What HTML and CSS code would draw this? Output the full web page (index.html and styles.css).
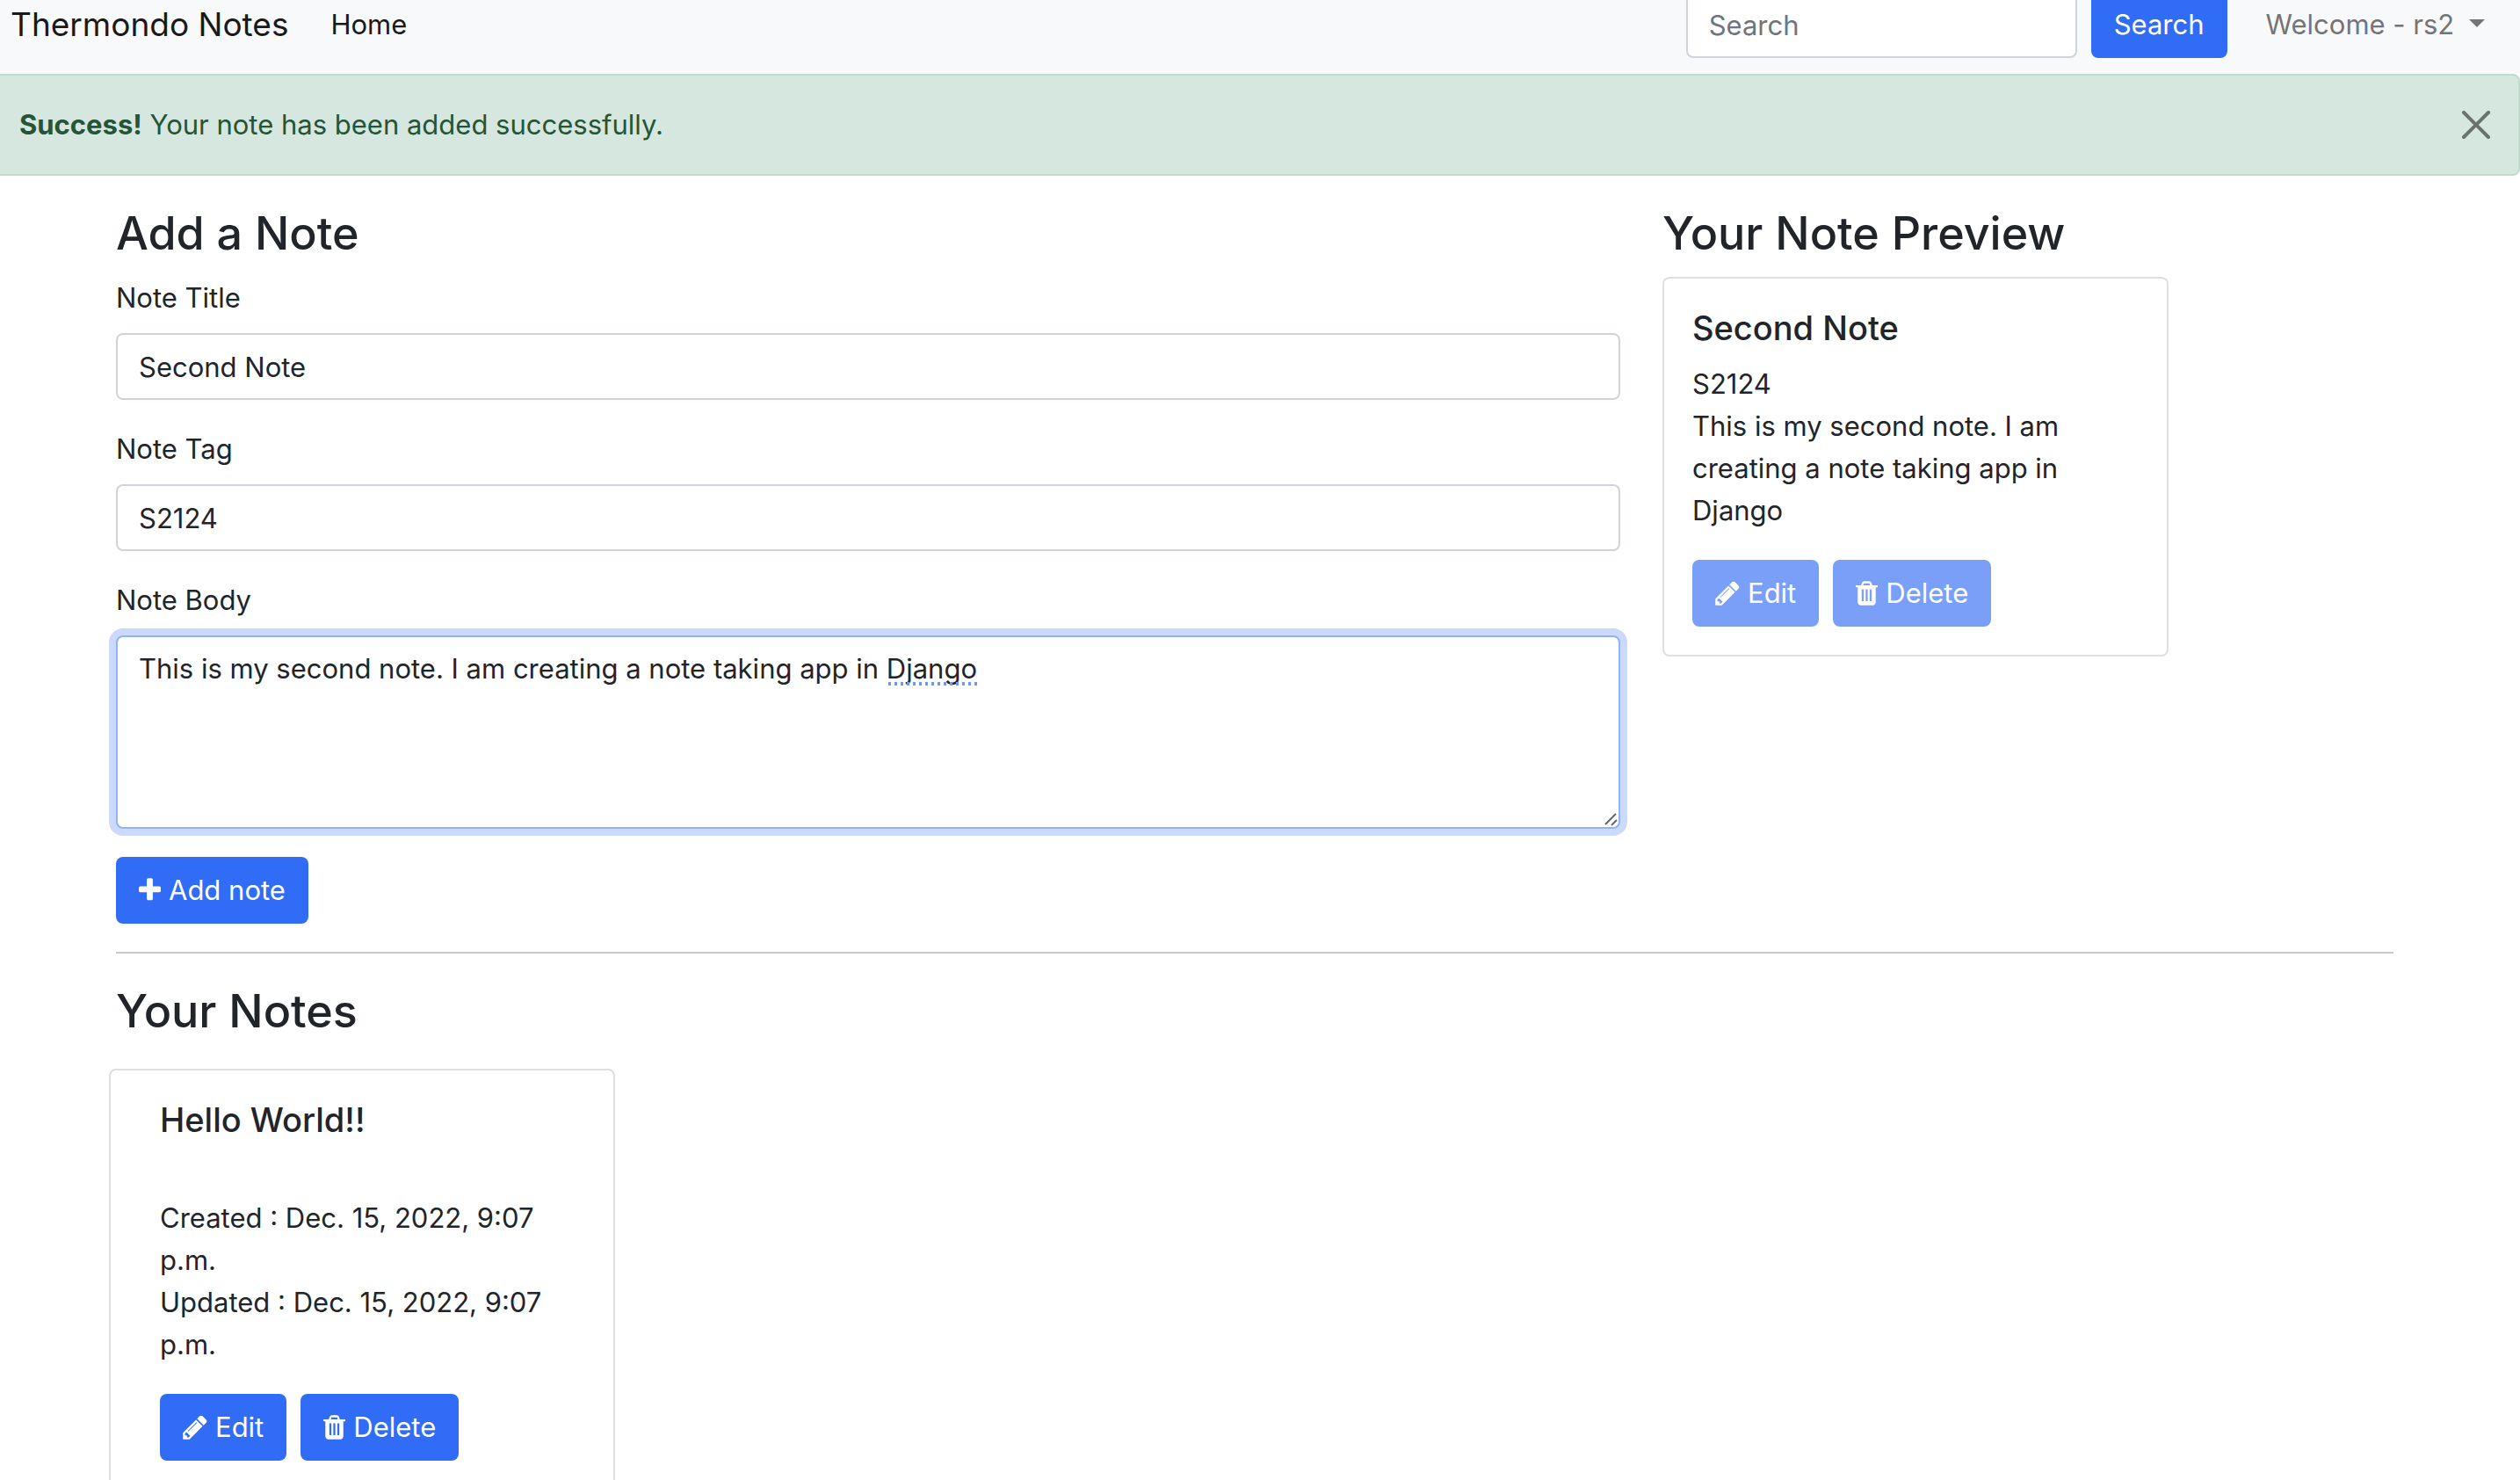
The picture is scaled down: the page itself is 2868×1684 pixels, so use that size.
FILE: index.html
```
<!DOCTYPE html>
<html lang="en">
<head>
<meta charset="utf-8">
<meta name="viewport" content="width=device-width, initial-scale=1">
<title>Thermondo Notes</title>
<link rel="stylesheet" href="styles.css">
</head>
<body>
<svg class="sprite" aria-hidden="true">
  <symbol id="pencil" viewBox="0 0 1536 1792"><path transform="translate(0 1536) scale(1 -1)" fill="currentColor" d="M363 0l91 91l-235 235l-91 -91v-107h128v-128h107zM886 928q0 22 -22 22q-10 0 -17 -7l-542 -542q-7 -7 -7 -17q0 -22 22 -22q10 0 17 7l542 542q7 7 7 17zM832 1120l416 -416l-832 -832h-416v416zM1515 1024q0 -53 -37 -90l-166 -166l-416 416l166 165q36 38 90 38q53 0 91 -38l235 -234q37 -39 37 -91z"/></symbol>
  <symbol id="trash" viewBox="0 0 1408 1792"><path transform="translate(0 1536) scale(1 -1)" fill="currentColor" d="M512 160v704q0 14 -9 23t-23 9h-64q-14 0 -23 -9t-9 -23v-704q0 -14 9 -23t23 -9h64q14 0 23 9t9 23zM768 160v704q0 14 -9 23t-23 9h-64q-14 0 -23 -9t-9 -23v-704q0 -14 9 -23t23 -9h64q14 0 23 9t9 23zM1024 160v704q0 14 -9 23t-23 9h-64q-14 0 -23 -9t-9 -23v-704q0 -14 9 -23t23 -9h64q14 0 23 9t9 23zM480 1152h448l-48 117q-7 9 -17 11h-317q-10 -2 -17 -11zM1408 1120v-64q0 -14 -9 -23t-23 -9h-96v-948q0 -83 -47 -143.5t-113 -60.5h-832q-66 0 -113 58.500t-47 141.500v952h-96q-14 0 -23 9t-9 23v64q0 14 9 23t23 9h309l70 167q15 37 54 63t79 26h320q40 0 79 -26t54 -63l70 -167h309q14 0 23 -9t9 -23z"/></symbol>
  <symbol id="plus" viewBox="0 0 1408 1792"><path transform="translate(0 1536) scale(1 -1)" fill="currentColor" d="M1408 800v-192q0 -40 -28 -68t-68 -28h-416v-416q0 -40 -28 -68t-68 -28h-192q-40 0 -68 28t-28 68v416h-416q-40 0 -68 28t-28 68v192q0 40 28 68t68 28h416v416q0 40 28 68t68 28h192q40 0 68 -28t28 -68v-416h416q40 0 68 -28t28 -68z"/></symbol>
</svg>

<header class="navbar">
  <a class="brand" href="#">Thermondo Notes</a>
  <nav class="nav"><a class="nav-link active" href="#">Home</a></nav>
  <form class="search" role="search">
    <input class="control" type="search" placeholder="Search" aria-label="Search">
    <button class="btn" type="button">Search</button>
  </form>
  <a class="nav-link user" href="#">Welcome - rs2 <span class="caret"></span></a>
</header>

<div class="alert" role="alert">
  <p><strong>Success!</strong> Your note has been added successfully.</p>
  <button class="close" type="button" aria-label="Close">
    <svg viewBox="0 0 16 16" aria-hidden="true"><path d="M.293.293a1 1 0 0 1 1.414 0L8 6.586 14.293.293a1 1 0 1 1 1.414 1.414L9.414 8l6.293 6.293a1 1 0 0 1-1.414 1.414L8 9.414l-6.293 6.293a1 1 0 0 1-1.414-1.414L6.586 8 .293 1.707a1 1 0 0 1 0-1.414z"/></svg>
  </button>
</div>

<main class="container">
  <div class="row">
    <section class="col-form">
      <h1 class="heading">Add a Note</h1>
      <form>
        <div class="field">
          <label for="title">Note Title</label>
          <input class="control" id="title" type="text" value="Second Note">
        </div>
        <div class="field">
          <label for="tag">Note Tag</label>
          <input class="control" id="tag" type="text" value="S2124">
        </div>
        <div class="field">
          <label for="body">Note Body</label>
          <div class="editor">
            <textarea class="control focused" id="body" rows="4" spellcheck="false">This is my second note. I am creating a note taking app in Django</textarea>
            <span class="spelling"></span>
            <svg class="grip" viewBox="0 0 16 16" aria-hidden="true"><path d="M1 14L13 2M8 15l6-6"/></svg>
          </div>
        </div>
        <button class="btn" type="button"><svg class="icon icon-plus"><use href="#plus"/></svg>Add note</button>
      </form>
    </section>
    <section class="col-preview">
      <h2 class="heading">Your Note Preview</h2>
      <article class="card">
        <h3 class="card-title">Second Note</h3>
        <p>S2124</p>
        <p>This is my second note. I am creating a note taking app in Django</p>
        <div class="actions">
          <button class="btn" type="button" disabled><svg class="icon icon-pencil"><use href="#pencil"/></svg>Edit</button>
          <button class="btn" type="button" disabled><svg class="icon icon-trash"><use href="#trash"/></svg>Delete</button>
        </div>
      </article>
    </section>
  </div>

  <hr>

  <h2 class="heading">Your Notes</h2>
  <div class="notes">
    <article class="card note">
      <h3 class="card-title">Hello World!!</h3>
      <div class="dates">
        <p>Created : Dec. 15, 2022, 9:07 p.m.</p>
        <p>Updated : Dec. 15, 2022, 9:07 p.m.</p>
      </div>
      <div class="actions">
        <button class="btn" type="button"><svg class="icon icon-pencil"><use href="#pencil"/></svg>Edit</button>
        <button class="btn" type="button"><svg class="icon icon-trash"><use href="#trash"/></svg>Delete</button>
      </div>
    </article>
  </div>
</main>
</body>
</html>
```
FILE: styles.css
```
*, *::before, *::after { box-sizing: border-box; }

html { overflow: hidden; }

body {
  margin: 0 0 0 -12px;
  background: #fff;
  color: #212529;
  font: 400 31px/48px Inter, "Liberation Sans", sans-serif;
}

p, h1, h2, h3 { margin: 0; }
input, textarea, button { font: inherit; }
.sprite { display: none; }

.navbar {
  display: flex;
  align-items: center;
  margin-top: -28px;
  padding: 18px 24px;
  background: #f8f9fb;
}
.brand {
  margin-right: 32px;
  color: #191919;
  font-size: 37px;
  text-decoration: none;
}
.nav { flex: 1; }
.nav-link {
  padding: 0 16px;
  color: #191919;
  text-decoration: none;
}
.search {
  display: flex;
  gap: 16px;
  margin-right: 28px;
}
.search .control { width: 445px; }
.user { color: #747576; }
.caret {
  display: inline-block;
  margin-left: 8px;
  vertical-align: 8px;
  border: 9px solid transparent;
  border-top-color: currentColor;
  border-bottom: 0;
}

.control {
  display: block;
  width: 100%;
  height: 76px;
  padding: 12px 24px;
  border: 2px solid #ced4da;
  border-radius: 8px;
  outline: 0;
  background: #fff;
  color: #212529;
}
.control::placeholder { color: #6d757d; opacity: 1; }

.btn {
  display: inline-flex;
  align-items: center;
  gap: 9px;
  height: 76px;
  padding: 0 26px;
  border: 0;
  border-radius: 8px;
  background: #306cf6;
  color: #fff;
}
.btn:disabled { background: #7a9ff9; }
.icon { height: 32px; }
.icon-pencil { width: 28px; }
.icon-trash, .icon-plus { width: 25px; }

.alert {
  display: flex;
  align-items: center;
  justify-content: space-between;
  margin-bottom: 32px;
  padding: 32px;
  border: 2px solid #c1dbcf;
  border-radius: 8px;
  background: #d5e7de;
  color: #265437;
}
.close {
  width: 32px;
  height: 32px;
  padding: 0;
  border: 0;
  background: none;
  opacity: .5;
}
.close svg { display: block; }

.container {
  max-width: 2640px;
  margin: 0 auto;
  padding: 0 24px;
}
.row {
  display: flex;
  margin: 0 -24px;
}
.col-form { width: 66.6667%; padding: 0 24px; }
.col-preview { width: 33.3333%; padding: 0 24px; }

.heading {
  margin-bottom: 16px;
  font-size: 52px;
  font-weight: 500;
  line-height: 67px;
}

.field { margin-bottom: 32px; }
.field label { display: block; margin-bottom: 16px; }
.editor { position: relative; }
textarea.control { height: auto; resize: none; }
.focused {
  border-color: #8fb4f8;
  box-shadow: 0 0 0 8px #cbd9fc;
}
.spelling {
  position: absolute;
  top: 53px;
  left: 877px;
  width: 105px;
  height: 4px;
  background: radial-gradient(circle, #6c99f7 2px, transparent 2px) 0 0 / 7px 4px;
}
.grip {
  position: absolute;
  right: 2px;
  bottom: 3px;
  width: 16px;
  height: 16px;
  fill: none;
  stroke: #666;
  stroke-width: 2;
}

.card {
  width: 576px;
  padding: 32px;
  border: 2px solid #dfdfdf;
  border-radius: 8px;
}
.card-title {
  margin-bottom: 16px;
  font-size: 38px;
  font-weight: 500;
  line-height: 48px;
}
.actions {
  display: flex;
  gap: 16px;
  margin-top: 32px;
}

hr {
  height: 2px;
  margin: 32px 0;
  border: 0;
  background: #c8c9ca;
}

.notes {
  display: flex;
  margin: 32px -8px;
}
.note { padding: 32px 56px; }
.dates { padding-top: 48px; }
```
